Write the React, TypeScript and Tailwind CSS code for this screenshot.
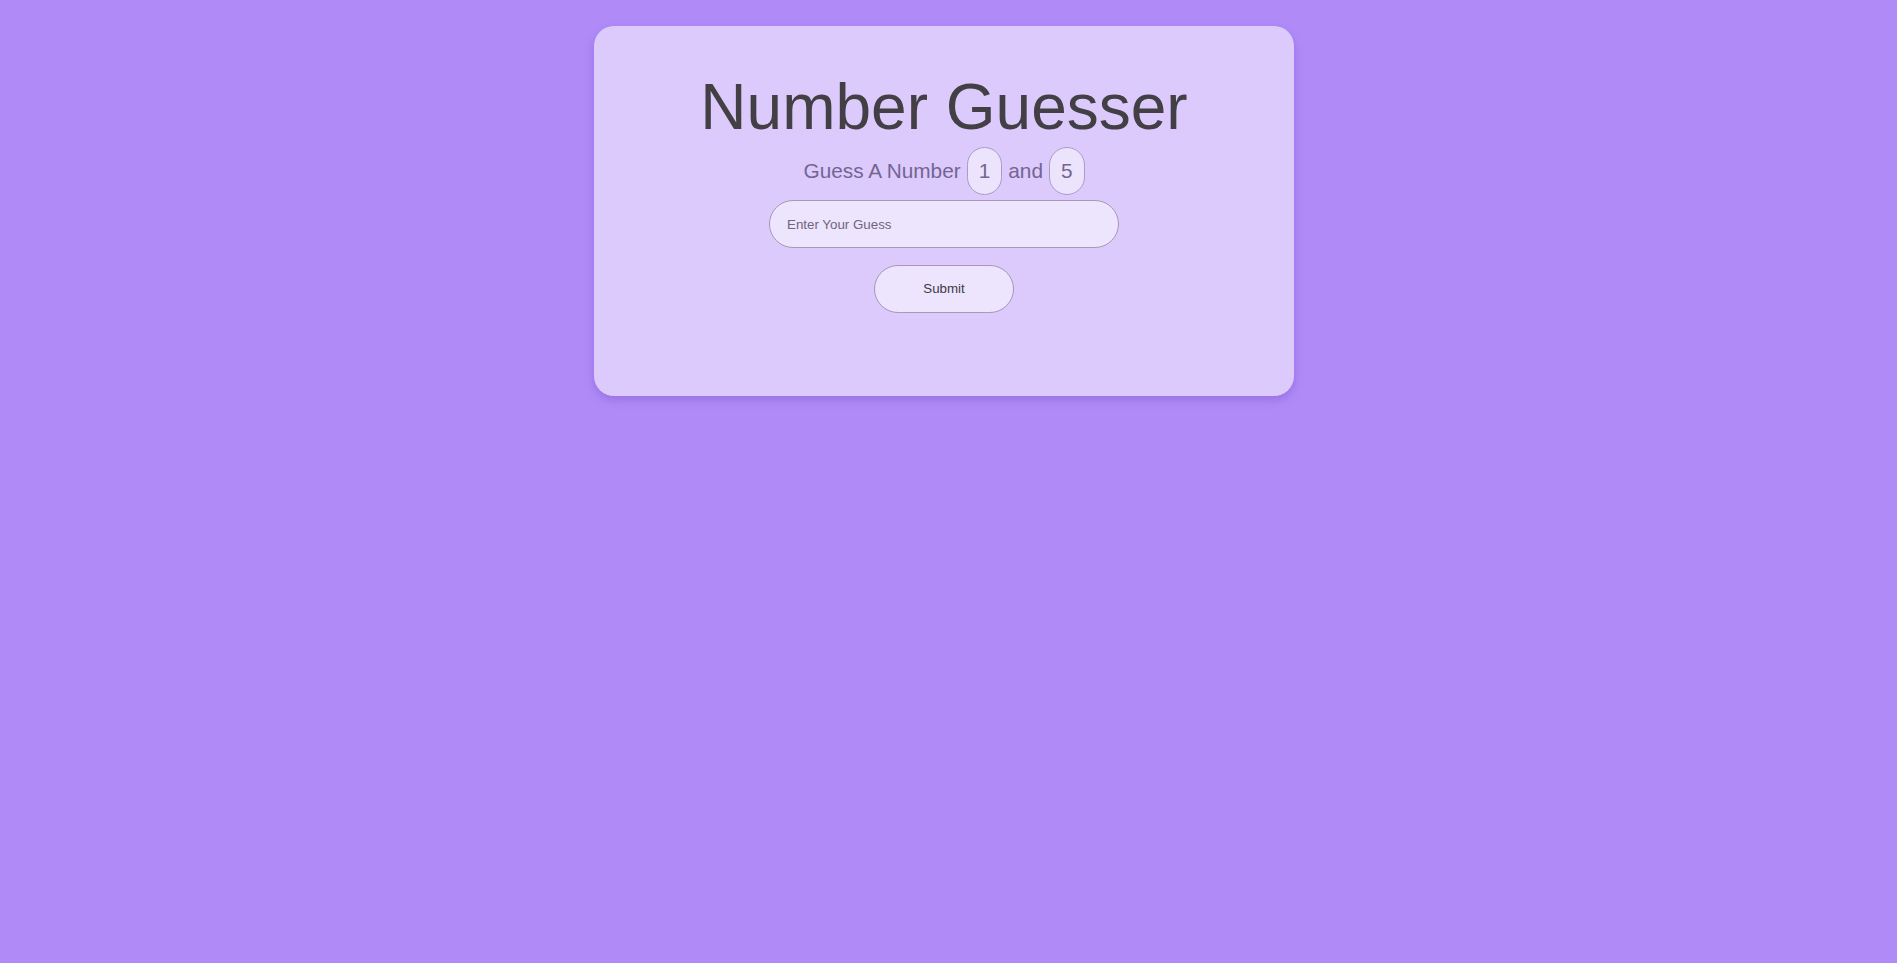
import React, { useState } from "react";

const App = () => {
  const [guess, setGuess] = useState("");

  return (
    <div className="min-h-[963px] w-full bg-[#b08bf8] pt-[26px] pr-[9px] font-['Liberation_Sans',Arial,sans-serif]">
      <div className="mx-auto flex h-[370px] w-[700px] flex-col items-center rounded-[20px] bg-[#dccafc] pt-[44px] shadow-[0_4px_10px_rgba(80,40,160,0.25)]">
        <h1 className="text-[64px] leading-[74px] text-[#434045]">Number Guesser</h1>

        <div className="mt-[3px] flex items-center text-[20.8px] text-[#736592]">
          <span>Guess A Number</span>
          <span className="ml-[6px] flex h-[48px] items-center rounded-full border border-[#ab9bc6] bg-[#ece3fd] px-[11px]">1</span>
          <span className="mx-[6px]">and</span>
          <span className="flex h-[48px] items-center rounded-full border border-[#ab9bc6] bg-[#ece3fd] px-[11px]">5</span>
        </div>

        <input
          value={guess}
          onChange={(e) => setGuess(e.target.value)}
          placeholder="Enter Your Guess"
          className="mt-[5px] h-[48px] w-[350px] rounded-full border border-[#a996b8] bg-[#ede4fd] px-[17px] text-[13.33px] text-[#444] outline-none placeholder:text-[#6f667c]"
        />

        <button className="mt-[17px] h-[48px] w-[140px] rounded-full border border-[#a996b8] bg-[#ede4fd] text-[13.33px] text-[#3f3a45]">
          Submit
        </button>
      </div>
    </div>
  );
};

export default App;
